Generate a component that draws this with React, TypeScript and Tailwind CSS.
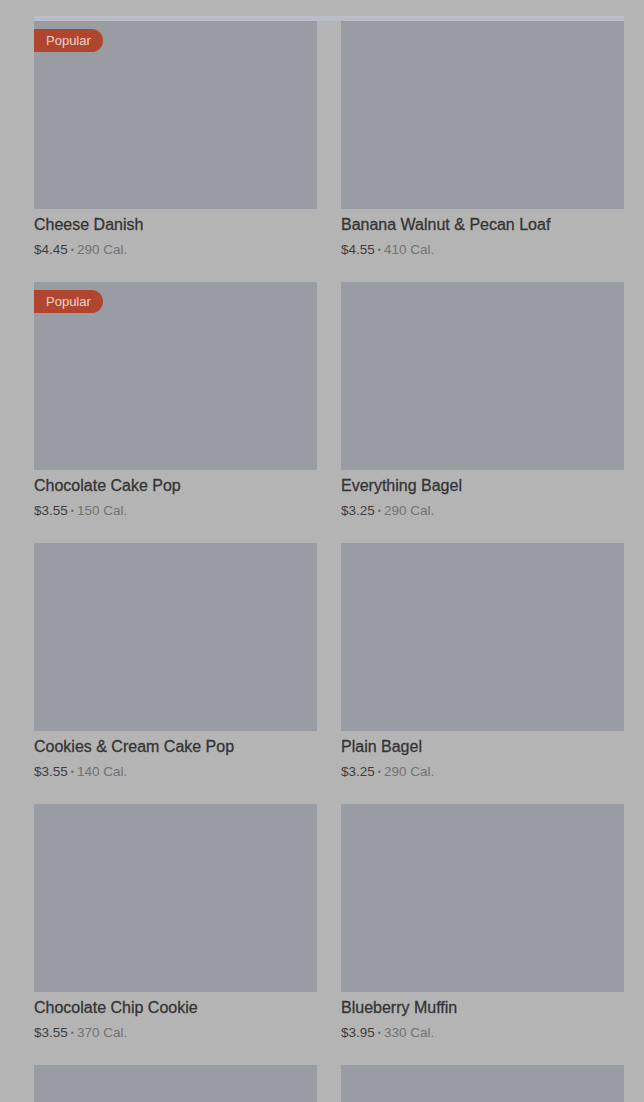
import React from 'react';

type Item = { name: string; price: string; cal: string; popular?: boolean };

const items: Item[] = [
  { name: 'Cheese Danish', price: '$4.45', cal: '290 Cal.', popular: true },
  { name: 'Banana Walnut & Pecan Loaf', price: '$4.55', cal: '410 Cal.' },
  { name: 'Chocolate Cake Pop', price: '$3.55', cal: '150 Cal.', popular: true },
  { name: 'Everything Bagel', price: '$3.25', cal: '290 Cal.' },
  { name: 'Cookies & Cream Cake Pop', price: '$3.55', cal: '140 Cal.' },
  { name: 'Plain Bagel', price: '$3.25', cal: '290 Cal.' },
  { name: 'Chocolate Chip Cookie', price: '$3.55', cal: '370 Cal.' },
  { name: 'Blueberry Muffin', price: '$3.95', cal: '330 Cal.' },
];

const Card = ({ item }: { item: Item }) => (
  <div className="flex flex-col">
    <div className="relative h-[188px] bg-[#9a9ca3]">
      {item.popular && (
        <span className="absolute left-0 top-[8px] h-[23px] rounded-r-full bg-[#b0462f] pl-[12px] pr-[12px] text-[13px] leading-[23px] text-[#f1d6cf]">
          Popular
        </span>
      )}
    </div>
    <div className="mt-[6px] text-base leading-5 text-[#353535] [-webkit-text-stroke:0.3px_#353535]">{item.name}</div>
    <div className="mt-[5px] flex items-center text-[13.5px] leading-5">
      <span className="text-[#3e3e3e]">{item.price}</span>
      <span className="mx-[3px] text-[9px] text-[#6e6e6e]">•</span>
      <span className="text-[#727272]">{item.cal}</span>
    </div>
  </div>
);

export default function App() {
  return (
    <div
      className="h-[1102px] overflow-hidden bg-[#b4b4b4] pl-[34px] pr-[20px] pt-[16px]"
      style={{ fontFamily: '"Liberation Sans", Arial, sans-serif' }}
    >
      <div className="h-[5px] bg-[#babdc5]" />
      <div className="grid grid-cols-2 gap-x-[24px] gap-y-[22px]">
        {items.map((it) => (
          <Card key={it.name} item={it} />
        ))}
        {/* next row, only the tops of its pictures are in view */}
        <div className="h-[188px] bg-[#9a9ca3]" />
        <div className="h-[188px] bg-[#9a9ca3]" />
      </div>
    </div>
  );
}
